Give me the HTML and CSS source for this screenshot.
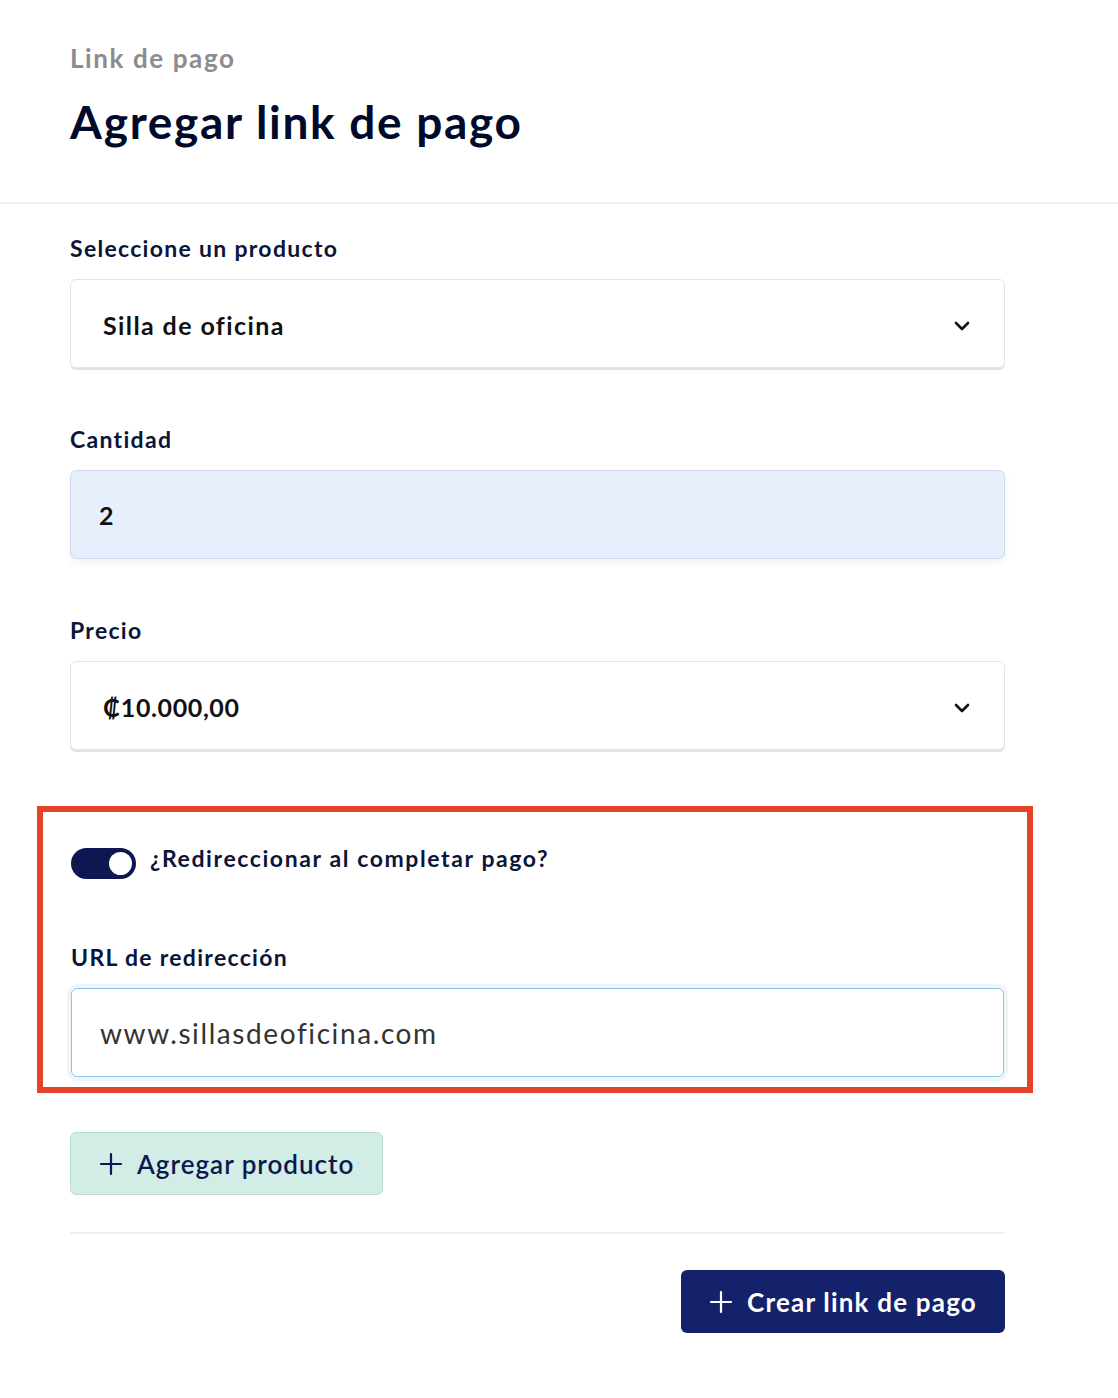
FILE: index.html
```html
<!DOCTYPE html>
<html lang="es">
<head>
    <meta charset="UTF-8">
    <meta name="viewport" content="width=device-width, initial-scale=1.0">
    <title>Agregar link de pago</title>
    <link rel="stylesheet" href="styles.css">
</head>
<body>
    <!-- Encabezado -->
    <header class="page-header">
        <div class="eyebrow">Link de pago</div>
        <h1 class="title">Agregar link de pago</h1>
    </header>

    <main class="form">
        <div class="field">
            <label class="label">Seleccione un producto</label>
            <div class="select">
                <span>Silla de oficina</span>
                <svg class="chevron" width="16" height="10" viewBox="0 0 16 10"><path d="M2 2l6 6 6-6" fill="none" stroke="#111" stroke-width="2.6" stroke-linecap="round" stroke-linejoin="round"/></svg>
            </div>
        </div>

        <div class="field">
            <label class="label">Cantidad</label>
            <div class="input input-filled">2</div>
        </div>

        <div class="field">
            <label class="label">Precio</label>
            <div class="select">
                <span class="price">₡10.000,00</span>
                <svg class="chevron" width="16" height="10" viewBox="0 0 16 10"><path d="M2 2l6 6 6-6" fill="none" stroke="#111" stroke-width="2.6" stroke-linecap="round" stroke-linejoin="round"/></svg>
            </div>
        </div>

        <!-- Bloque resaltado -->
        <div class="highlight">
            <div class="toggle-row">
                <span class="toggle"><span class="knob"></span></span>
                <span class="toggle-label">¿Redireccionar al completar pago?</span>
            </div>
            <div class="field field-last">
                <label class="label">URL de redirección</label>
                <div class="input input-focus">www.sillasdeoficina.com</div>
            </div>
        </div>

        <button class="btn btn-light">
            <svg width="24" height="24" viewBox="0 0 24 24"><path d="M12 2v20M2 12h20" stroke="#0d1852" stroke-width="2.2" stroke-linecap="round"/></svg>
            Agregar producto
        </button>

        <hr class="divider">

        <div class="actions">
            <button class="btn btn-primary">
                <svg width="24" height="24" viewBox="0 0 24 24"><path d="M12 2v20M2 12h20" stroke="#fff" stroke-width="2.2" stroke-linecap="round"/></svg>
                Crear link de pago
            </button>
        </div>
    </main>
</body>
</html>
```

FILE: styles.css
```css
/* Estilo general */
body {
    margin: 0;
    font-family: Lato, "Open Sans", sans-serif;
    background-color: #ffffff;
    color: #0a1538;
}

/* Encabezado */
.page-header {
    padding: 40px 70px 52px;
    border-bottom: 2px solid #efeff0;
}

.eyebrow {
    font-size: 26px;
    line-height: 36px;
    font-weight: 700;
    letter-spacing: 1.6px;
    color: #8b8b90;
}

.title {
    margin: 18px 0 0;
    font-size: 46px;
    line-height: 56px;
    font-weight: 700;
    letter-spacing: 1.7px;
    color: #000a2b;
}

/* Formulario */
.form {
    width: 935px;
    padding: 29px 70px 60px;
}

.field {
    margin-bottom: 56px;
}

.field-last {
    margin-bottom: 0;
}

.label {
    display: block;
    font-size: 23px;
    line-height: 30px;
    font-weight: 700;
    letter-spacing: 1.3px;
    margin-bottom: 16px;
}

.select,
.input {
    box-sizing: border-box;
    height: 89px;
    display: flex;
    align-items: center;
    border: 1px solid #e4e4e6;
    border-radius: 6px;
    box-shadow: 0 2px 0 #e2e2e6;
    font-size: 25px;
    font-weight: 700;
    letter-spacing: 1.4px;
    color: #111;
}

.select {
    justify-content: space-between;
    padding: 2px 32px 0;
}

.price {
    letter-spacing: 0.6px;
}

.chevron {
    margin: 2px 2px 0 0;
}

.input {
    padding: 0 28px;
}

.input-filled {
    background-color: #e8effc;
    border-color: #cfdbef;
    box-shadow: 0 4px 8px rgba(0, 0, 0, 0.05);
}

.input-focus {
    border-color: #8ec6e6;
    box-shadow: 0 0 0 4px #eef6f9;
    font-weight: 400;
    font-size: 28px;
    letter-spacing: 1.6px;
    color: #333;
}

/* Recuadro rojo */
.highlight {
    margin: 56px -28px 39px -33px;
    padding: 36px 23px 10px 28px;
    border: 6px solid #e8412a;
}

.toggle-row {
    display: flex;
    align-items: flex-start;
    gap: 14px;
    margin-bottom: 63px;
}

.toggle {
    position: relative;
    width: 65px;
    height: 31px;
    border-radius: 16px;
    background-color: #0d1852;
    flex-shrink: 0;
}

.knob {
    position: absolute;
    right: 4px;
    top: 4px;
    width: 23px;
    height: 23px;
    border-radius: 50%;
    background-color: #fff;
}

.toggle-label {
    font-size: 23px;
    line-height: 20px;
    font-weight: 700;
    letter-spacing: 1.6px;
}

/* Botones */
.btn {
    display: inline-flex;
    align-items: center;
    gap: 14px;
    height: 63px;
    padding: 0 28px;
    border-radius: 6px;
    font-family: Lato, sans-serif;
    font-size: 26px;
    letter-spacing: 1px;
    cursor: pointer;
}

.btn-light {
    background-color: #d1ede6;
    border: 1px solid #bbdcd3;
    color: #0d1852;
    font-weight: 600;
}

.btn-primary {
    background-color: #13226b;
    border: none;
    color: #fff;
    font-weight: 700;
    letter-spacing: 1.2px;
}

.divider {
    border: none;
    border-top: 2px solid #f0f0f1;
    margin: 37px 0 36px;
}

.actions {
    display: flex;
    justify-content: flex-end;
}
```
